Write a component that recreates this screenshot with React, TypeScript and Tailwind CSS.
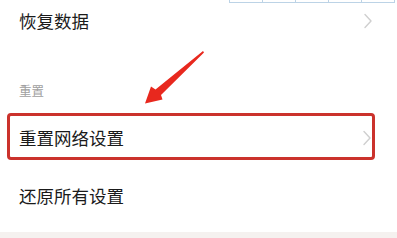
import React from "react";

const Chevron = () => (
  <svg width="10" height="16" viewBox="0 0 10 16" fill="none">
    <path d="M2 1.5 L8 8 L2 14.5" stroke="#cfcfcf" strokeWidth="1.4" strokeLinecap="round" strokeLinejoin="round" />
  </svg>
);

export default function App() {
  const font = "font-['Noto_Sans_CJK_SC','Noto_Sans',sans-serif]";
  return (
    <div className={`relative w-[397px] h-[238px] overflow-hidden bg-white ${font}`}>
      <div className="h-[3px] pl-[229px] flex">
        {[0, 1, 2, 3, 4].map((i) => (
          <div key={i} className="w-[33px] h-[3px] border-l border-b border-[#bcd3e6]" />
        ))}
        <div className="w-[1px] h-[3px] bg-[#bcd3e6]" />
      </div>
      <div className="h-[35px] flex items-center justify-between pl-[19px] pr-[24px]">
        <span className="text-[17.5px] leading-[20px] text-[#1a1a1a]">恢复数据</span>
        <Chevron />
      </div>
      <div className="pt-[44px] pl-[19px] mb-[13px]">
        <span className="block text-[12.5px] leading-[18px] text-[#a0a0a0]">重置</span>
      </div>
      <div className="mx-[7px] mr-[22px] h-[47px] border-[3px] border-[#cb322c] rounded-[4px] flex items-center justify-between pl-[9px] pr-[0px]">
        <span className="text-[17.5px] leading-[20px] text-[#1a1a1a] mt-[3px]">重置网络设置</span>
        <span className="mt-[2px]"><Chevron /></span>
      </div>
      <div className="h-[72px] flex items-center pl-[19px]">
        <span className="text-[17.5px] leading-[20px] text-[#1a1a1a]">还原所有设置</span>
      </div>
      <div className="h-[6px] bg-[#f5f1ef]" />
      <svg className="absolute left-0 top-0 pointer-events-none" width="397" height="238" viewBox="0 0 397 238">
        <polygon
          points="203,51 204,52.5 161,95 162.5,99.5 145,103.5 151,86.5 155.5,89.5"
          fill="#e8281e"
        />
      </svg>
    </div>
  );
}
